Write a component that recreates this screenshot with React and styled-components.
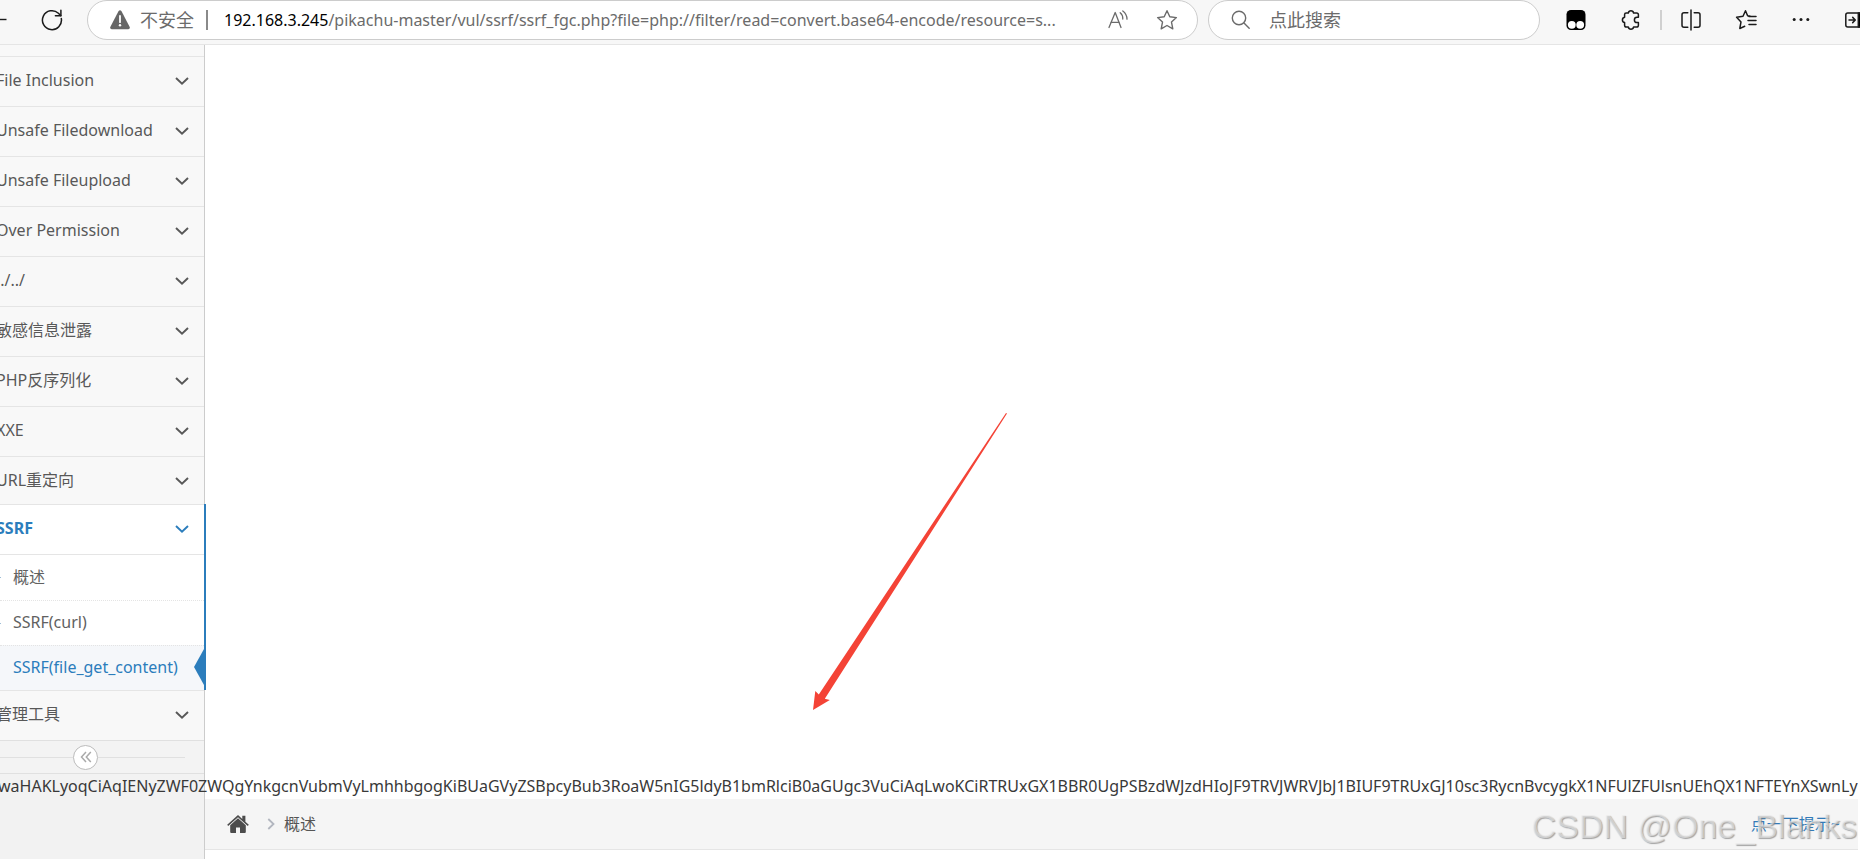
import { useState } from "react"
import styled, { createGlobalStyle, css } from "styled-components"

const GlobalStyle = createGlobalStyle`
    * {
        box-sizing: border-box;
    }
    body {
        margin: 0;
        background: #FFFFFF;
        color: #393939;
        font-family: "Noto Sans", "Noto Sans CJK SC", sans-serif;
        font-size: 16px;
        line-height: 24px;
        overflow: hidden;
    }
    button, input {
        font: inherit;
    }
    svg {
        display: block;
        flex: none;
    }
`

const BackIcon = () => (
    <svg width="8" height="22" viewBox="0 0 8 22" fill="none" stroke="#1B1B1B" strokeWidth="1.4">
        <path d="M0 10.5H6.5" />
    </svg>
)

const ReloadIcon = () => (
    <svg width="22" height="22" viewBox="0 0 22 22" fill="none" stroke="#1B1B1B" strokeWidth="1.5" strokeLinecap="round" strokeLinejoin="round">
        <path d="M20.3 9.5A9.5 9.5 0 1 1 17.4 4.2L19.8 6.6" />
        <path d="M19.9 1.2V6.7H14.4" />
    </svg>
)

const WarningIcon = () => (
    <svg width="20" height="20" viewBox="0 0 20 20">
        <path d="M8.6 1.1Q10 -.7 11.4 1.1L19.7 17Q20.3 19 18.3 19.2H1.7Q-.3 19 .3 17Z" fill="#666666" />
        <path d="M10 6V12.2" stroke="#FFFFFF" strokeWidth="1.8" strokeLinecap="round" />
        <circle cx="10" cy="15.3" r="1.2" fill="#FFFFFF" />
    </svg>
)

const ReadAloudIcon = () => (
    <svg width="22" height="22" viewBox="0 0 22 22" fill="none" stroke="#6B6B6B" strokeWidth="1.3" strokeLinecap="round" strokeLinejoin="round">
        <path d="M1 18.5L7.2 3.5L13 18.5" />
        <path d="M3.1 13.3H11" />
        <path d="M12.2 3.7Q15 6 14.8 10" />
        <path d="M14.8 2Q19 5.2 19 10.2" />
    </svg>
)

const StarIcon = () => (
    <svg width="22" height="22" viewBox="0 0 22 22" fill="none" stroke="#6B6B6B" strokeWidth="1.4" strokeLinejoin="round">
        <path d="M11 1.7L13.8 7.8L20.4 8.6L15.5 13.1L16.8 19.8L11 16.5L5.2 19.8L6.5 13.1L1.6 8.6L8.2 7.8Z" />
    </svg>
)

const SearchIcon = () => (
    <svg width="20" height="20" viewBox="0 0 20 20" fill="none" stroke="#6B6B6B" strokeWidth="1.4" strokeLinecap="round">
        <circle cx="8" cy="8" r="6.7" />
        <path d="M13 13L18.2 18.2" />
    </svg>
)

const MonkeyIcon = () => (
    <svg width="22" height="22" viewBox="0 0 22 22">
        <rect x="1.5" y="1" width="19" height="20" rx="4.5" fill="#000000" />
        <circle cx="6.8" cy="15.8" r="3.9" fill="#FFFFFF" />
        <circle cx="15.2" cy="15.8" r="3.9" fill="#FFFFFF" />
    </svg>
)

const PuzzleIcon = () => (
    <svg width="22" height="22" viewBox="0 0 22 22" fill="none" stroke="#1B1B1B" strokeWidth="1.5" strokeLinejoin="round">
        <path d="M6.2 4H8.3A2.7 2.7 0 0 1 13.6 4H16.6Q18.4 4 18.4 5.8V8.3H17A2.6 2.6 0 0 0 17 13.5H18.4V16.2Q18.4 18 16.6 18H13.6A2.7 2.7 0 0 1 8.3 18H6.4Q4.6 18 4.6 16.2V13.6A2.7 2.7 0 0 1 4.6 8.3V5.6Q4.6 4 6.2 4Z" />
    </svg>
)

const SplitIcon = () => (
    <svg width="22" height="22" viewBox="0 0 22 22" fill="none" stroke="#1B1B1B" strokeWidth="1.5" strokeLinecap="round">
        <path d="M7.8 3.8H4Q2 3.8 2 5.8V16.2Q2 18.2 4 18.2H7.8" />
        <path d="M14.2 3.8H18Q20 3.8 20 5.8V16.2Q20 18.2 18 18.2H14.2" />
        <path d="M11 1V21" />
    </svg>
)

const FavoritesIcon = () => (
    <svg width="22" height="22" viewBox="0 0 22 22" fill="none" stroke="#1B1B1B" strokeWidth="1.5" strokeLinejoin="round" strokeLinecap="round">
        <path d="M15 7.2L12.6 6.8L10.5 1.8L8 7.3L1.6 8.3L6 12.9L4.8 19.5L9.7 17.2" />
        <path d="M14 7.5H21M13 11.5H21M14 15.5H21" />
    </svg>
)

const MoreIcon = () => (
    <svg width="22" height="22" viewBox="0 0 22 22" fill="#1B1B1B">
        <circle cx="4.2" cy="10.5" r="1.5" />
        <circle cx="11" cy="10.5" r="1.5" />
        <circle cx="17.8" cy="10.5" r="1.5" />
    </svg>
)

const PanelIcon = () => (
    <svg width="22" height="22" viewBox="0 0 22 22" fill="none" stroke="#1B1B1B" strokeWidth="1.5" strokeLinecap="round" strokeLinejoin="round">
        <rect x=".8" y="4" width="20" height="14" rx="2" />
        <path d="M13.3 4H20V18H13.3Z" fill="#000000" />
        <path d="M4 11H10.2M7.7 8.4L10.3 11L7.7 13.6" />
    </svg>
)

const ChevronDown = () => (
    <svg width="14" height="10" viewBox="0 0 14 10" fill="none" stroke="currentColor" strokeWidth="1.9">
        <path d="M1 2L7 7.8L13 2" />
    </svg>
)

const ChevronRight = () => (
    <svg width="8" height="12" viewBox="0 0 8 12" fill="none" stroke="#B2B6BF" strokeWidth="1.8">
        <path d="M1.3 1L6.5 6L1.3 11" />
    </svg>
)

const DoubleLeft = () => (
    <svg width="12" height="12" viewBox="0 0 12 12" fill="none" stroke="#AAAAAA" strokeWidth="1.5">
        <path d="M6 1L1.5 6L6 11M10.8 1L6.3 6L10.8 11" />
    </svg>
)

const HomeIcon = () => (
    <svg width="22" height="18" viewBox="0 0 22 18" fill="#4C4C4C">
        <path d="M11 0L15.3 3.9V.8H18.4V6.7L21.8 9.8L20.8 11L11 2.2L1.2 11L.2 9.8Z" />
        <path d="M11 3.2L18.8 10.3V17Q18.8 18 17.8 18H13V12.4H9V18H4.2Q3.2 18 3.2 17V10.3Z" />
    </svg>
)

const Toolbar = styled.header`
    display: flex;
    align-items: flex-start;
    height: 45px;
    background: #F7F7F7;
    border-bottom: 1px solid #E5E5E5;
`

const IconButton = styled.button`
    display: flex;
    align-items: center;
    justify-content: center;
    flex: none;
    width: ${({ $width = 22 }) => $width}px;
    height: 39px;
    padding: 0;
    border: none;
    background: none;
    cursor: pointer;
`

const NavButtons = styled.div`
    display: flex;
    flex: none;
    gap: 33px;
    width: 87px;
`

const Field = styled.div`
    display: flex;
    align-items: center;
    height: 40px;
    background: #FFFFFF;
    border: 1px solid #CCCCCC;
    border-radius: 20px;
    color: #6B6B6B;
    font-size: 18px;
`

const AddressField = styled(Field)`
    flex: 1;
    min-width: 0;
    padding: 0 19px 0 22px;
`

const Insecure = styled.span`
    flex: none;
    margin-left: 10px;
    padding-right: 12px;
    border-right: 2px solid #8A8A8A;
    line-height: 20px;
`

const Address = styled.div`
    flex: 1;
    min-width: 0;
    margin: 0 16px;
    overflow: hidden;
    white-space: nowrap;
    font-size: 16px;
    b {
        font-weight: 400;
        color: #000000;
    }
`

const FieldActions = styled.div`
    display: flex;
    gap: 26px;
`

const SearchField = styled(Field)`
    flex: none;
    width: 332px;
    margin-left: 10px;
    padding: 0 22px;
    gap: 18px;
    input {
        flex: 1;
        min-width: 0;
        padding: 0;
        border: none;
        outline: none;
        background: none;
    }
    input::placeholder {
        color: #6B6B6B;
        opacity: 1;
    }
`

const Actions = styled.div`
    display: flex;
    flex: none;
    align-items: center;
    gap: 18px;
    width: 320px;
    height: 39px;
    padding-left: 25px;
    overflow: hidden;
`

const ToolbarGroup = styled.div`
    display: flex;
    gap: 33px;
`

const Separator = styled.span`
    flex: none;
    width: 2px;
    height: 20px;
    background: #D0D0D0;
`

const Page = styled.div`
    display: grid;
    grid-template-columns: 205px minmax(0, 1fr);
    grid-template-rows: auto 25px auto 1fr;
    min-height: calc(100vh - 45px);
    padding-right: 2px;
`

const Sidebar = styled.aside`
    grid-area: 1 / 1 / -1 / 2;
    background: #F2F2F2;
    border-right: 1px solid #CCCCCC;
`

const Menu = styled.nav`
    padding-top: 11px;
    background: #F8F8F8;
`

const MenuButton = styled.button`
    display: flex;
    align-items: center;
    justify-content: space-between;
    width: 100%;
    height: 50px;
    padding: 0 15px 2px 0;
    border: none;
    border-top: 1px solid #E5E5E5;
    background: #F8F8F8;
    color: #585858;
    white-space: nowrap;
    cursor: pointer;
    span {
        margin-left: -4px;
        padding-bottom: 2px;
    }
    ${({ $active }) => $active && css`
        background: #FFFFFF;
        color: #2B7DBC;
        font-weight: 700;
    `}
`

const MenuGroup = styled.div`
    ${({ $active }) => $active && css`
        margin-top: -2px;
        margin-right: -2px;
        border-right: 2px solid #2B7DBC;
    `}
`

const SubMenu = styled.div`
    border-top: 1px solid #E5E5E5;
    background: #FFFFFF;
`

const SubLink = styled.a`
    position: relative;
    display: flex;
    align-items: center;
    height: 45px;
    padding: 0 0 2px 13px;
    color: #616161;
    text-decoration: none;
    white-space: nowrap;
    & + & {
        border-top: 1px dotted #E4E4E4;
    }
    ${({ $active }) => $active ? css`
        background: #F5F7FA;
        color: #2B7DBC;
        &::after {
            content: "";
            position: absolute;
            right: 0;
            top: 3px;
            border: solid transparent;
            border-width: 18px 10px 18px 0;
            border-right-color: #2B7DBC;
        }
    ` : css`
        &::before {
            content: "";
            position: absolute;
            left: 0;
            top: 22px;
            width: 1px;
            height: 1px;
            background: #9DBDD6;
        }
    `}
`

const Collapse = styled.div`
    display: flex;
    align-items: center;
    height: 34px;
    padding-right: 19px;
    border-top: 1px solid #E0E0E0;
    border-bottom: 1px solid #E0E0E0;
    background: #F3F3F3;
    &::before, &::after {
        content: "";
        height: 1px;
        background: #E0E0E0;
    }
    &::before {
        width: 73px;
    }
    &::after {
        flex: 1;
    }
    button {
        display: flex;
        align-items: center;
        justify-content: center;
        width: 25px;
        height: 25px;
        padding: 0;
        border: 1px solid #BBBBBB;
        border-radius: 50%;
        background: #FFFFFF;
        cursor: pointer;
    }
`

const Content = styled.main`
    grid-area: 1 / 2;
    height: 729px;
`

const Output = styled.div`
    grid-area: 2 / 1 / 3 / -1;
    z-index: 1;
    overflow: hidden;
    white-space: nowrap;
    text-indent: -2px;
`

const Breadcrumbs = styled.div`
    grid-area: 3 / 2;
    display: flex;
    align-items: center;
    height: 51px;
    padding: 0 18px 0 22px;
    background: #F5F5F5;
    border-bottom: 1px solid #E5E5E5;
    color: #555555;
    a {
        color: #337AB7;
        text-decoration: none;
    }
    .home {
        margin-right: 18px;
    }
    .current {
        flex: 1;
        margin-left: 9px;
    }
`

const Arrow = styled.svg`
    position: absolute;
    left: 812px;
    top: 412px;
`

const Watermark = styled.div`
    position: absolute;
    right: 3px;
    bottom: 13px;
    z-index: 2;
    color: rgba(236, 236, 236, 0.6);
    font-family: "Liberation Sans", sans-serif;
    font-size: 34px;
    line-height: 40px;
    text-shadow: 1px 1px 1px rgba(130, 130, 130, 0.7);
    white-space: nowrap;
    pointer-events: none;
`

const menus = [
    { title: "File Inclusion" },
    { title: "Unsafe Filedownload" },
    { title: "Unsafe Fileupload" },
    { title: "Over Permission" },
    { title: "../../" },
    { title: "敏感信息泄露" },
    { title: "PHP反序列化" },
    { title: "XXE" },
    { title: "URL重定向" },
    { title: "SSRF", links: ["概述", "SSRF(curl)", "SSRF(file_get_content)"] },
    { title: "管理工具" },
]

const output = "waHAKLyoqCiAqIENyZWF0ZWQgYnkgcnVubmVyLmhhbgogKiBUaGVyZSBpcyBub3RoaW5nIG5ldyB1bmRlciB0aGUgc3VuCiAqLwoKCiRTRUxGX1BBR0UgPSBzdWJzdHIoJF9TRVJWRVJbJ1BIUF9TRUxGJ10sc3RycnBvcygkX1NFUlZFUlsnUEhQX1NFTEYnXSwnLy"

const BrowserBar = () => (
    <Toolbar>
        <NavButtons>
            <IconButton $width={8} aria-label="后退"><BackIcon /></IconButton>
            <IconButton aria-label="刷新"><ReloadIcon /></IconButton>
        </NavButtons>
        <AddressField>
            <WarningIcon />
            <Insecure>不安全</Insecure>
            <Address>
                <b>192.168.3.245</b>/pikachu-master/vul/ssrf/ssrf_fgc.php?file=php://filter/read=convert.base64-encode/resource=s...
            </Address>
            <FieldActions>
                <IconButton aria-label="大声朗读"><ReadAloudIcon /></IconButton>
                <IconButton aria-label="收藏"><StarIcon /></IconButton>
            </FieldActions>
        </AddressField>
        <SearchField>
            <SearchIcon />
            <input type="search" aria-label="点此搜索" placeholder="点此搜索" />
        </SearchField>
        <Actions>
            <ToolbarGroup>
                <IconButton aria-label="Tampermonkey"><MonkeyIcon /></IconButton>
                <IconButton aria-label="扩展"><PuzzleIcon /></IconButton>
            </ToolbarGroup>
            <Separator />
            <ToolbarGroup>
                <IconButton aria-label="分屏"><SplitIcon /></IconButton>
                <IconButton aria-label="收藏夹"><FavoritesIcon /></IconButton>
                <IconButton aria-label="更多"><MoreIcon /></IconButton>
                <IconButton aria-label="侧栏"><PanelIcon /></IconButton>
            </ToolbarGroup>
        </Actions>
    </Toolbar>
)

export default function App() {
    const [open, setOpen] = useState("SSRF")
    return (
        <>
            <GlobalStyle />
            <BrowserBar />
            <Page>
                <Sidebar>
                    <Menu>
                        {menus.map(({ title, links }) => (
                            <MenuGroup key={title} $active={!!links}>
                                <MenuButton $active={!!links} onClick={() => setOpen(open === title ? "" : title)}>
                                    <span>{title}</span>
                                    <ChevronDown />
                                </MenuButton>
                                {links && open === title && (
                                    <SubMenu>
                                        {links.map((link, index) => (
                                            <SubLink key={link} href="#" $active={index === 2}>{link}</SubLink>
                                        ))}
                                    </SubMenu>
                                )}
                            </MenuGroup>
                        ))}
                    </Menu>
                    <Collapse>
                        <button aria-label="收起菜单"><DoubleLeft /></button>
                    </Collapse>
                </Sidebar>
                <Content />
                <Output>{output}</Output>
                <Breadcrumbs>
                    <a className="home" href="#" aria-label="首页"><HomeIcon /></a>
                    <ChevronRight />
                    <span className="current">概述</span>
                    <a href="#">点一下提示~</a>
                </Breadcrumbs>
            </Page>
            <Arrow width="196" height="300" viewBox="0 0 196 300" fill="#F44336">
                <path d="M194 1L195 1.5L12.8 286.7L17.8 288L1 298L3.3 279L6.8 282.4Z" />
            </Arrow>
            <Watermark>CSDN @One_Blanks</Watermark>
        </>
    )
}
